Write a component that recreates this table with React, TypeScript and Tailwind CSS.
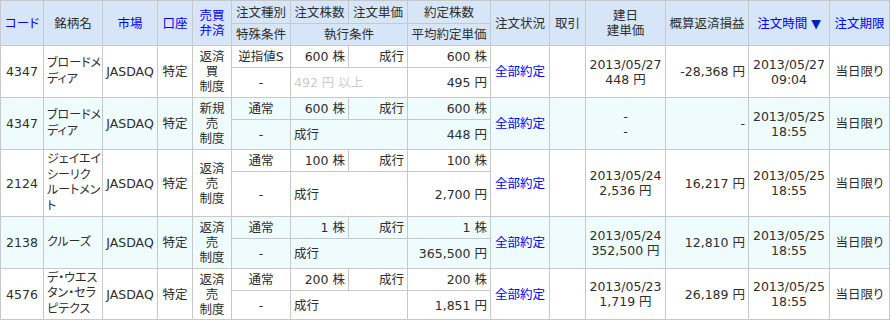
import React from "react";

type Order = {
  code: string;
  name: string[];
  side: string[];
  type: string;
  qty: string;
  exec: string;
  execMuted?: boolean;
  avg: string;
  openDate: string[];
  pl: string;
  time: string[];
  alt: boolean;
  h: [string, string];
};

const orders: Order[] = [
  {
    code: "4347",
    name: ["ブロードメ", "ディア"],
    side: ["返済", "買", "制度"],
    type: "逆指値S",
    qty: "600 株",
    exec: "492 円 以上",
    execMuted: true,
    avg: "495 円",
    openDate: ["2013/05/27", "448 円"],
    pl: "-28,368 円",
    time: ["2013/05/27", "09:04"],
    alt: false,
    h: ["h-[22px]", "h-[30px]"],
  },
  {
    code: "4347",
    name: ["ブロードメ", "ディア"],
    side: ["新規", "売", "制度"],
    type: "通常",
    qty: "600 株",
    exec: "成行",
    avg: "448 円",
    openDate: ["-", "-"],
    pl: "-",
    time: ["2013/05/25", "18:55"],
    alt: true,
    h: ["h-[22px]", "h-[30px]"],
  },
  {
    code: "2124",
    name: ["ジェイエイ", "シーリク", "ルートメン", "ト"],
    side: ["返済", "売", "制度"],
    type: "通常",
    qty: "100 株",
    exec: "成行",
    avg: "2,700 円",
    openDate: ["2013/05/24", "2,536 円"],
    pl: "16,217 円",
    time: ["2013/05/25", "18:55"],
    alt: false,
    h: ["h-[22px]", "h-[45px]"],
  },
  {
    code: "2138",
    name: ["クルーズ"],
    side: ["返済", "売", "制度"],
    type: "通常",
    qty: "1 株",
    exec: "成行",
    avg: "365,500 円",
    openDate: ["2013/05/24", "352,500 円"],
    pl: "12,810 円",
    time: ["2013/05/25", "18:55"],
    alt: true,
    h: ["h-[22px]", "h-[30px]"],
  },
  {
    code: "4576",
    name: ["デ・ウエス", "タン・セラ", "ピテクス"],
    side: ["返済", "売", "制度"],
    type: "通常",
    qty: "200 株",
    exec: "成行",
    avg: "1,851 円",
    openDate: ["2013/05/23", "1,719 円"],
    pl: "26,189 円",
    time: ["2013/05/25", "18:55"],
    alt: false,
    h: ["h-[22px]", "h-[29px]"],
  },
];

const widths = [43, 59, 55, 35, 39, 59, 58, 59, 83, 59, 36, 80, 83, 81, 60];

const cell = "border border-[#c8c8c8] px-[3px] py-0 align-middle whitespace-nowrap";
const th = `${cell} font-normal text-center`;
const link = "text-[#0000ff]";

const Lines = ({ lines }: { lines: string[] }) => (
  <>
    {lines.map((l, i) => (
      <div key={i}>{l}</div>
    ))}
  </>
);

export default function App() {
  return (
    <div className="bg-white w-[891px] h-[323px] overflow-hidden">
      <table
        className="border-collapse table-fixed w-[889px] text-[12.5px] leading-[15px] text-[#2e2e2e] [font-feature-settings:'palt']"
        style={{ fontFamily: '"DejaVu Sans", "Noto Sans CJK JP", sans-serif' }}
      >
        <colgroup>
          {widths.map((w, i) => (
            <col key={i} style={{ width: w }} />
          ))}
        </colgroup>
        <thead className="bg-[#d6e6f8]">
          <tr className="h-[23px]">
            <th rowSpan={2} className={`${th} ${link}`}>コード</th>
            <th rowSpan={2} className={th}>銘柄名</th>
            <th rowSpan={2} className={`${th} ${link}`}>市場</th>
            <th rowSpan={2} className={`${th} ${link}`}>口座</th>
            <th rowSpan={2} className={`${th} ${link}`}>
              売買
              <br />
              弁済
            </th>
            <th className={th}>注文種別</th>
            <th className={th}>注文株数</th>
            <th className={th}>注文単価</th>
            <th className={th}>約定株数</th>
            <th rowSpan={2} className={th}>注文状況</th>
            <th rowSpan={2} className={th}>取引</th>
            <th rowSpan={2} className={th}>
              建日
              <br />
              建単価
            </th>
            <th rowSpan={2} className={th}>概算返済損益</th>
            <th rowSpan={2} className={`${th} ${link}`}>
              注文時間 <span className="text-[#0020c0]">▼</span>
            </th>
            <th rowSpan={2} className={`${th} ${link}`}>注文期限</th>
          </tr>
          <tr className="h-[22px]">
            <th className={th}>特殊条件</th>
            <th colSpan={2} className={th}>執行条件</th>
            <th className={th}>平均約定単価</th>
          </tr>
        </thead>
        <tbody>
          {orders.map((o, i) => {
            const bg = o.alt ? "bg-[#effcfe]" : "bg-white";
            return (
              <React.Fragment key={i}>
                <tr className={`${bg} ${o.h[0]}`}>
                  <td rowSpan={2} className={`${cell} text-center`}>{o.code}</td>
                  <td rowSpan={2} className={`${cell} text-left text-[12px] leading-[15.5px]`}>
                    <Lines lines={o.name} />
                  </td>
                  <td rowSpan={2} className={`${cell} text-center`}>JASDAQ</td>
                  <td rowSpan={2} className={`${cell} text-center`}>特定</td>
                  <td rowSpan={2} className={`${cell} text-center`}>
                    <Lines lines={o.side} />
                  </td>
                  <td className={`${cell} text-center`}>{o.type}</td>
                  <td className={`${cell} text-right`}>{o.qty}</td>
                  <td className={`${cell} text-right`}>成行</td>
                  <td className={`${cell} text-right`}>{o.qty}</td>
                  <td rowSpan={2} className={`${cell} text-center ${link}`}>全部約定</td>
                  <td rowSpan={2} className={cell}></td>
                  <td rowSpan={2} className={`${cell} text-center`}>
                    <Lines lines={o.openDate} />
                  </td>
                  <td rowSpan={2} className={`${cell} text-right`}>{o.pl}</td>
                  <td rowSpan={2} className={`${cell} text-center`}>
                    <Lines lines={o.time} />
                  </td>
                  <td rowSpan={2} className={`${cell} text-center`}>当日限り</td>
                </tr>
                <tr className={`${bg} ${o.h[1]}`}>
                  <td className={`${cell} text-center`}>-</td>
                  <td
                    colSpan={2}
                    className={`${cell} text-left ${o.execMuted ? "text-[#cccccc]" : ""}`}
                  >
                    {o.exec}
                  </td>
                  <td className={`${cell} text-right`}>{o.avg}</td>
                </tr>
              </React.Fragment>
            );
          })}
        </tbody>
      </table>
    </div>
  );
}
